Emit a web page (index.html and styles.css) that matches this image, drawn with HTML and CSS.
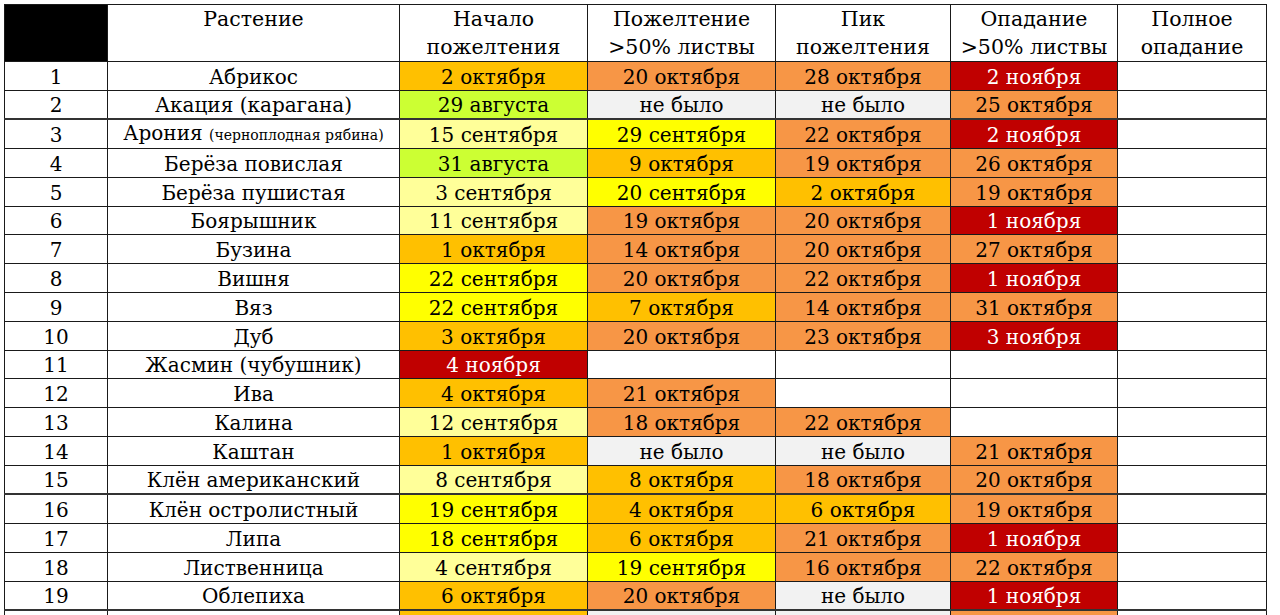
FILE: index.html
```html
<!DOCTYPE html>
<html lang="ru">
<head>
<meta charset="utf-8">
<title>Листопад</title>
<link rel="stylesheet" href="styles.css">
</head>
<body>
<table class="grid">
  <colgroup>
    <col class="c-num"><col class="c-name"><col class="c-d1"><col class="c-d2"><col class="c-d3"><col class="c-d4"><col class="c-d5">
  </colgroup>
  <thead>
    <tr class="head">
      <th class="corner"></th>
      <th>Растение</th>
      <th>Начало<br>пожелтения</th>
      <th>Пожелтение<br>&gt;50% листвы</th>
      <th>Пик<br>пожелтения</th>
      <th>Опадание<br>&gt;50% листвы</th>
      <th>Полное<br>опадание</th>
    </tr>
  </thead>
  <tbody>
    <tr><td>1</td><td>Абрикос</td><td class="or">2 октября</td><td class="lo">20 октября</td><td class="lo">28 октября</td><td class="rd">2 ноября</td><td></td></tr>
    <tr class="thick"><td>2</td><td>Акация (карагана)</td><td class="gr">29 августа</td><td class="gy">не было</td><td class="gy">не было</td><td class="lo">25 октября</td><td></td></tr>
    <tr><td>3</td><td>Арония <span class="small">(черноплодная рябина)</span></td><td class="ly">15 сентября</td><td class="ye">29 сентября</td><td class="lo">22 октября</td><td class="rd">2 ноября</td><td></td></tr>
    <tr><td>4</td><td>Берёза повислая</td><td class="gr">31 августа</td><td class="or">9 октября</td><td class="lo">19 октября</td><td class="lo">26 октября</td><td></td></tr>
    <tr><td>5</td><td>Берёза пушистая</td><td class="ly">3 сентября</td><td class="ye">20 сентября</td><td class="or">2 октября</td><td class="lo">19 октября</td><td></td></tr>
    <tr><td>6</td><td>Боярышник</td><td class="ly">11 сентября</td><td class="lo">19 октября</td><td class="lo">20 октября</td><td class="rd">1 ноября</td><td></td></tr>
    <tr><td>7</td><td>Бузина</td><td class="or">1 октября</td><td class="lo">14 октября</td><td class="lo">20 октября</td><td class="lo">27 октября</td><td></td></tr>
    <tr><td>8</td><td>Вишня</td><td class="ye">22 сентября</td><td class="lo">20 октября</td><td class="lo">22 октября</td><td class="rd">1 ноября</td><td></td></tr>
    <tr><td>9</td><td>Вяз</td><td class="ye">22 сентября</td><td class="or">7 октября</td><td class="lo">14 октября</td><td class="lo">31 октября</td><td></td></tr>
    <tr><td>10</td><td>Дуб</td><td class="or">3 октября</td><td class="lo">20 октября</td><td class="lo">23 октября</td><td class="rd">3 ноября</td><td></td></tr>
    <tr><td>11</td><td>Жасмин (чубушник)</td><td class="rd">4 ноября</td><td></td><td></td><td></td><td></td></tr>
    <tr><td>12</td><td>Ива</td><td class="or">4 октября</td><td class="lo">21 октября</td><td></td><td></td><td></td></tr>
    <tr><td>13</td><td>Калина</td><td class="ly">12 сентября</td><td class="lo">18 октября</td><td class="lo">22 октября</td><td></td><td></td></tr>
    <tr><td>14</td><td>Каштан</td><td class="or">1 октября</td><td class="gy">не было</td><td class="gy">не было</td><td class="lo">21 октября</td><td></td></tr>
    <tr class="thick"><td>15</td><td>Клён американский</td><td class="ly">8 сентября</td><td class="or">8 октября</td><td class="lo">18 октября</td><td class="lo">20 октября</td><td></td></tr>
    <tr><td>16</td><td>Клён остролистный</td><td class="ye">19 сентября</td><td class="or">4 октября</td><td class="or">6 октября</td><td class="lo">19 октября</td><td></td></tr>
    <tr><td>17</td><td>Липа</td><td class="ye">18 сентября</td><td class="or">6 октября</td><td class="lo">21 октября</td><td class="rd">1 ноября</td><td></td></tr>
    <tr><td>18</td><td>Лиственница</td><td class="ly">4 сентября</td><td class="ye">19 сентября</td><td class="lo">16 октября</td><td class="lo">22 октября</td><td></td></tr>
    <tr class="thick"><td>19</td><td>Облепиха</td><td class="or">6 октября</td><td class="lo">20 октября</td><td class="gy">не было</td><td class="rd">1 ноября</td><td></td></tr>
    <tr><td></td><td></td><td class="or"></td><td class="gy"></td><td class="gy"></td><td class="lo"></td><td></td></tr>
  </tbody>
</table>
</body>
</html>
```
FILE: styles.css
```css
html, body {
  margin: 0;
  padding: 0;
  background: #ffffff;
}
body {
  padding: 4px 0 0 4px;
  font-family: "DejaVu Serif", "Liberation Serif", serif;
  color: #000;
}
.grid {
  border-collapse: collapse;
  table-layout: fixed;
  width: 1262px;
}
.c-num { width: 103px; }
.c-name { width: 292px; }
.c-d1 { width: 188px; }
.c-d2 { width: 188px; }
.c-d3 { width: 175px; }
.c-d4 { width: 167px; }
.c-d5 { width: 149px; }

.grid th,
.grid td {
  border: 1px solid #1a1a1a;
  padding: 0;
  text-align: center;
  white-space: nowrap;
  overflow: hidden;
}
.grid th {
  font-weight: normal;
  font-size: 20.5px;
  line-height: 28px;
  height: 56px;
  vertical-align: top;
}
.grid th.corner { background: #000; }
.grid td {
  font-size: 20px;
  line-height: 26px;
  height: 27.8px;
  vertical-align: bottom;
}
.grid tr.thick td {
  border-bottom: 2px solid #333;
  height: 27.3px;
}
.small { font-size: 14px; }

.or { background: #ffc000; }
.lo { background: #f79646; }
.rd { background: #c00000; color: #fff; }
.ye { background: #ffff00; }
.ly { background: #ffff99; }
.gr { background: #ccff33; }
.gy { background: #f2f2f2; }
```
